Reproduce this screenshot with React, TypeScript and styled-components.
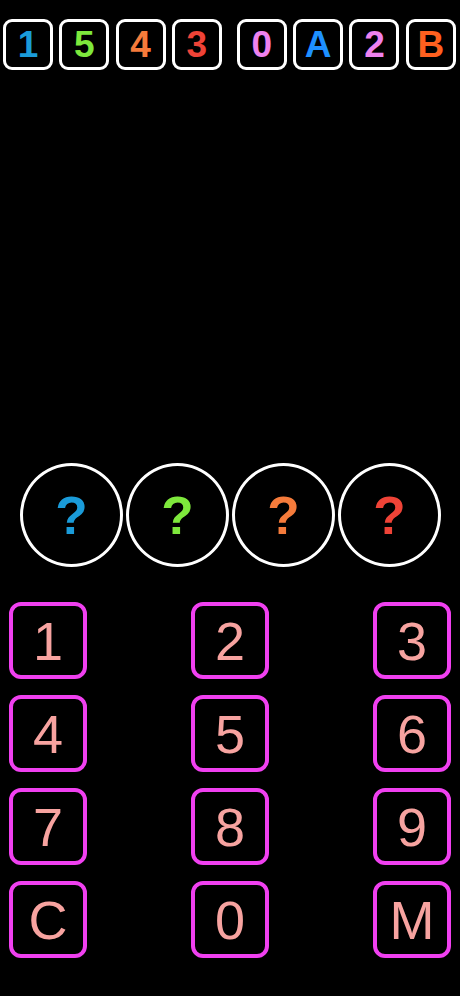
import React from "react";
import styled, { createGlobalStyle } from "styled-components";

const Global = createGlobalStyle`
  html, body { margin: 0; padding: 0; background: #000; }
  body { font-family: "Liberation Sans", Arial, sans-serif; }
  #root { min-height: 996px; background: #000; }
`;

const Page = styled.div`
  width: 460px;
  height: 996px;
  background: #000;
  display: flex;
  flex-direction: column;
  box-sizing: border-box;
`;

const TopBar = styled.div`
  display: flex;
  gap: 15px;
  padding: 19px 0 0 3px;
`;

const Group = styled.div`
  display: flex;
  gap: 6.3px;
`;

const Tile = styled.div<{ $color: string }>`
  width: 50px;
  height: 51px;
  box-sizing: border-box;
  border: 3px solid #fff;
  border-radius: 9px;
  display: flex;
  align-items: center;
  justify-content: center;
  color: ${(p) => p.$color};
  font-weight: 700;
  font-size: 37px;
  line-height: 1;
`;

const Spacer = styled.div`
  flex: 1;
`;

const Circles = styled.div`
  display: flex;
  justify-content: center;
  gap: 3px;
  padding-left: 1px;
`;

const Circle = styled.div<{ $color: string }>`
  width: 103px;
  height: 104px;
  box-sizing: border-box;
  border: 3px solid #fff;
  border-radius: 50%;
  display: flex;
  align-items: center;
  justify-content: center;
  color: ${(p) => p.$color};
  font-weight: 700;
  font-size: 53px;
  line-height: 1;
`;

const Keypad = styled.div`
  display: grid;
  grid-template-columns: 78px 78px 78px;
  justify-content: space-between;
  row-gap: 16px;
  padding: 35px 9px 38px 9px;
`;

const Key = styled.button`
  width: 78px;
  height: 77px;
  box-sizing: border-box;
  border: 4.5px solid #f040f0;
  border-radius: 12px;
  background: #000;
  color: #f7a3a0;
  font-family: "Liberation Sans", Arial, sans-serif;
  font-size: 54px;
  font-weight: 400;
  line-height: 1;
  padding: 0;
  display: flex;
  align-items: center;
  justify-content: center;
`;

const code1 = [
  { c: "1", col: "#1a9bd9" },
  { c: "5", col: "#7ee83c" },
  { c: "4", col: "#f57b3b" },
  { c: "3", col: "#ef4337" },
];
const code2 = [
  { c: "0", col: "#ee82ee" },
  { c: "A", col: "#1e90ff" },
  { c: "2", col: "#ee82ee" },
  { c: "B", col: "#ff601f" },
];
const guesses = ["#1a9bd9", "#7ee83c", "#f57b3b", "#ef4337"];
const keys = ["1", "2", "3", "4", "5", "6", "7", "8", "9", "C", "0", "M"];

export default function App() {
  return (
    <Page>
      <Global />
      <TopBar>
        <Group>
          {code1.map((t, i) => (
            <Tile key={i} $color={t.col}>{t.c}</Tile>
          ))}
        </Group>
        <Group>
          {code2.map((t, i) => (
            <Tile key={i} $color={t.col}>{t.c}</Tile>
          ))}
        </Group>
      </TopBar>
      <Spacer />
      <Circles>
        {guesses.map((c, i) => (
          <Circle key={i} $color={c}>?</Circle>
        ))}
      </Circles>
      <Keypad>
        {keys.map((k) => (
          <Key key={k}>{k}</Key>
        ))}
      </Keypad>
    </Page>
  );
}
